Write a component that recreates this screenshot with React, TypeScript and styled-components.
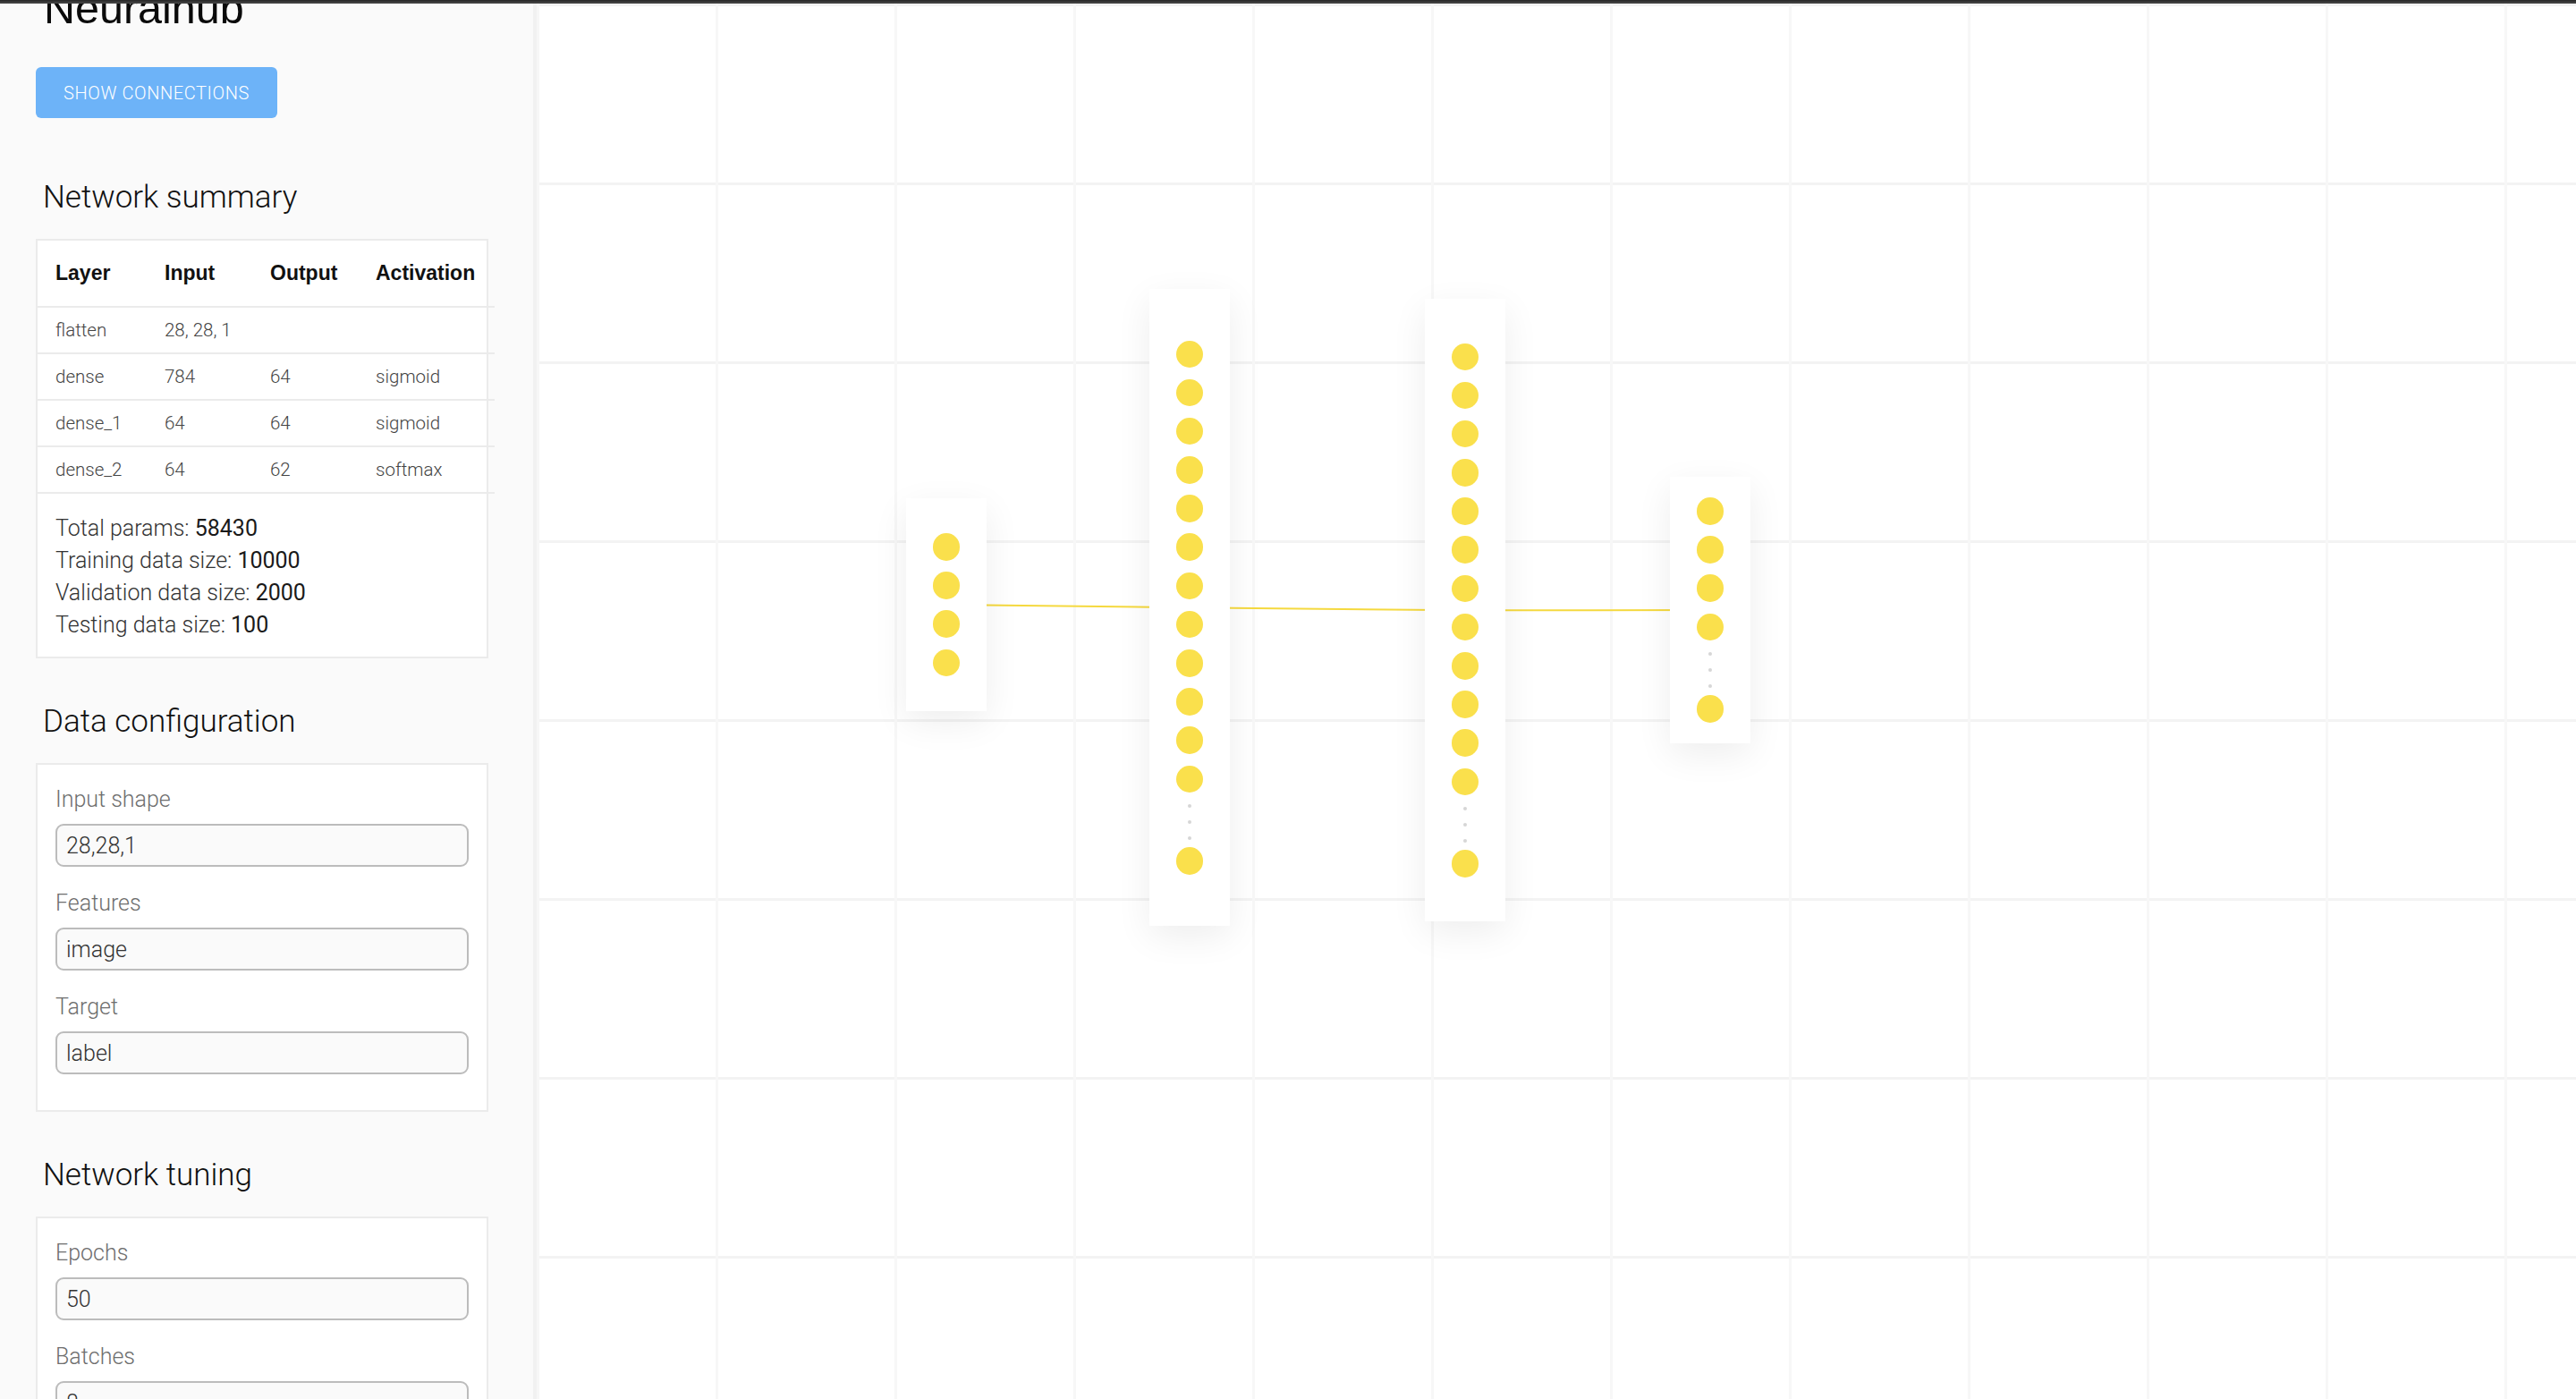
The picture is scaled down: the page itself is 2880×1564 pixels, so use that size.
import React from 'react';
import styled, { createGlobalStyle } from 'styled-components';

type LayerData = {
  id: string;
  x: number;
  y: number;
  pad: number;
  neurons: number;
  more: boolean;
};

const NEURON = 30.5;
const NEURON_GAP = 12.7;
const DOTS_HEIGHT = 36;

const layers: LayerData[] = [
  { id: 'flatten', x: 413, y: 553, pad: 39, neurons: 4, more: false },
  { id: 'dense', x: 685, y: 319, pad: 57.5, neurons: 12, more: true },
  { id: 'dense_1', x: 993, y: 330, pad: 49.5, neurons: 12, more: true },
  { id: 'dense_2', x: 1267, y: 529, pad: 23, neurons: 4, more: true },
];

const summaryRows = [
  { layer: 'flatten', input: '28, 28, 1', output: '', activation: '' },
  { layer: 'dense', input: '784', output: '64', activation: 'sigmoid' },
  { layer: 'dense_1', input: '64', output: '64', activation: 'sigmoid' },
  { layer: 'dense_2', input: '64', output: '62', activation: 'softmax' },
];

const stats = [
  { label: 'Total params:', value: '58430' },
  { label: 'Training data size:', value: '10000' },
  { label: 'Validation data size:', value: '2000' },
  { label: 'Testing data size:', value: '100' },
];

const layerHeight = (l: LayerData) => {
  const items = l.neurons + (l.more ? 2 : 0);
  const circles = l.neurons + (l.more ? 1 : 0);
  return l.pad * 2 + circles * NEURON + (items - 1) * NEURON_GAP + (l.more ? DOTS_HEIGHT : 0);
};

const App = () => {
  const centers = layers.map((l) => ({ x: l.x + 45, y: l.y + layerHeight(l) / 2 }));

  return (
    <>
      <GlobalStyle />
      <TopBar />
      <Main>
        <Sidebar>
          <Brand>Neuralhub</Brand>
          <ConnectButton type='button'>Show connections</ConnectButton>

          <SectionTitle>Network summary</SectionTitle>
          <Card>
            <SummaryTable>
              <colgroup>
                <col style={{ width: 122 }} />
                <col style={{ width: 118 }} />
                <col style={{ width: 118 }} />
                <col style={{ width: 153 }} />
              </colgroup>
              <thead>
                <tr>
                  <Th>Layer</Th>
                  <Th>Input</Th>
                  <Th>Output</Th>
                  <Th>Activation</Th>
                </tr>
              </thead>
              <tbody>
                {summaryRows.map((row) => (
                  <tr key={row.layer}>
                    <Td>{row.layer}</Td>
                    <Td>{row.input}</Td>
                    <Td>{row.output}</Td>
                    <Td>{row.activation}</Td>
                  </tr>
                ))}
              </tbody>
            </SummaryTable>
            <Stats>
              {stats.map((s) => (
                <StatLine key={s.label}>
                  {s.label} <StatValue>{s.value}</StatValue>
                </StatLine>
              ))}
            </Stats>
          </Card>

          <SectionTitle>Data configuration</SectionTitle>
          <Card>
            <Fields>
              <Field>
                <FieldLabel>Input shape</FieldLabel>
                <TextInput defaultValue='28,28,1' />
              </Field>
              <Field>
                <FieldLabel>Features</FieldLabel>
                <TextInput defaultValue='image' />
              </Field>
              <Field>
                <FieldLabel>Target</FieldLabel>
                <TextInput defaultValue='label' />
              </Field>
            </Fields>
          </Card>

          <SectionTitle>Network tuning</SectionTitle>
          <Card>
            <Fields>
              <Field>
                <FieldLabel>Epochs</FieldLabel>
                <TextInput defaultValue='50' />
              </Field>
              <Field>
                <FieldLabel>Batches</FieldLabel>
                <TextInput defaultValue='8' />
              </Field>
            </Fields>
          </Card>
        </Sidebar>

        <Canvas>
          <Links>
            {centers.slice(1).map((c, i) => (
              <line
                key={layers[i + 1].id}
                x1={centers[i].x}
                y1={centers[i].y}
                x2={c.x}
                y2={c.y}
                stroke='#f5d93f'
                strokeWidth={2}
              />
            ))}
          </Links>
          {layers.map((l) => (
            <LayerBox key={l.id} $x={l.x} $y={l.y} $pad={l.pad}>
              {Array.from({ length: l.neurons }).map((_, i) => (
                <Neuron key={i} />
              ))}
              {l.more && (
                <>
                  <More>
                    <Dot />
                    <Dot />
                    <Dot />
                  </More>
                  <Neuron />
                </>
              )}
            </LayerBox>
          ))}
        </Canvas>
      </Main>
    </>
  );
};

export default App;

const GlobalStyle = createGlobalStyle`
  html, body {
    margin: 0;
    padding: 0;
    height: 100%;
    overflow: hidden;
  }
  body {
    font-family: Roboto, 'Liberation Sans', sans-serif;
    background: #fff;
    color: #222;
  }
  * {
    box-sizing: border-box;
  }
`;

const TopBar = styled.div`
  height: 4px;
  background: linear-gradient(#262626, #4a4a4a);
`;

const Main = styled.div`
  display: flex;
  height: 1560px;
`;

const Sidebar = styled.aside`
  display: flex;
  flex-direction: column;
  align-items: flex-start;
  width: 600px;
  flex-shrink: 0;
  height: 100%;
  overflow: hidden;
  padding: 0 40px;
  background: #fafafa;
  border-right: 4px solid #f1f1f1;

  > * {
    flex-shrink: 0;
  }
`;

const Brand = styled.h1`
  margin: -19px 0 42px 9px;
  font-family: 'Liberation Sans', Arial, sans-serif;
  font-size: 48.5px;
  line-height: 48px;
  font-weight: 400;
  color: #0a0a0a;
`;

const ConnectButton = styled.button`
  width: 270px;
  height: 57px;
  margin-bottom: 69px;
  border: none;
  border-radius: 6px;
  background: #6db3f8;
  color: #fff;
  font-family: Roboto, sans-serif;
  font-size: 20px;
  font-weight: 300;
  letter-spacing: 0.6px;
  text-transform: uppercase;
  cursor: pointer;
`;

const SectionTitle = styled.h2`
  margin: 0 0 26px 8px;
  font-size: 35px;
  line-height: 40px;
  font-weight: 300;
  color: #111;
`;

const Card = styled.section`
  width: 506px;
  margin-bottom: 51px;
  background: #fff;
  border: 2px solid #ebebeb;
`;

const SummaryTable = styled.table`
  width: 511px;
  table-layout: fixed;
  border-collapse: separate;
  border-spacing: 0;
`;

const Th = styled.th`
  padding: 23px 20px;
  line-height: 27px;
  font-family: 'Liberation Sans', Arial, sans-serif;
  font-size: 23px;
  font-weight: 700;
  text-align: left;
  color: #111;
  border-bottom: 2px solid #ebebeb;
  white-space: nowrap;
`;

const Td = styled.td`
  padding: 12px 20px;
  line-height: 26px;
  font-size: 20.5px;
  font-weight: 300;
  color: #444;
  border-bottom: 2px solid #ebebeb;
  white-space: nowrap;
`;

const Stats = styled.div`
  padding: 21px 20px 17px;
`;

const StatLine = styled.div`
  font-size: 25px;
  line-height: 36px;
  font-weight: 300;
  color: #333;
`;

const StatValue = styled.span`
  font-weight: 400;
  color: #1a1a1a;
`;

const Fields = styled.div`
  display: flex;
  flex-direction: column;
  gap: 27px;
  padding: 25px 20px 40px;
`;

const Field = styled.label`
  display: flex;
  flex-direction: column;
  gap: 13px;
`;

const FieldLabel = styled.span`
  font-size: 25px;
  line-height: 28px;
  font-weight: 300;
  color: #6e6e6e;
`;

const TextInput = styled.input`
  width: 100%;
  height: 48px;
  flex-shrink: 0;
  padding: 0 10px;
  border: 2px solid #bcbcbc;
  border-radius: 9px;
  background: #fafafa;
  font-family: Roboto, sans-serif;
  font-size: 25px;
  font-weight: 300;
  color: #333;
  outline: none;
`;

const Canvas = styled.main`
  position: relative;
  flex: 1;
  overflow: hidden;
  background-color: #fff;
  background-image: linear-gradient(to right, #f7f7f7 3px, transparent 3px),
    linear-gradient(to bottom, #f3f3f3 3px, transparent 3px);
  background-size: 200px 200px;
`;

const Links = styled.svg`
  position: absolute;
  inset: 0;
  width: 100%;
  height: 100%;
`;

const LayerBox = styled.div<{ $x: number; $y: number; $pad: number }>`
  position: absolute;
  left: ${({ $x }) => $x}px;
  top: ${({ $y }) => $y}px;
  width: 90px;
  padding: ${({ $pad }) => $pad}px 0;
  display: flex;
  flex-direction: column;
  align-items: center;
  gap: ${NEURON_GAP}px;
  background: #fff;
  box-shadow: 0 12px 40px rgba(0, 0, 0, 0.07);
`;

const Neuron = styled.span`
  width: ${NEURON}px;
  height: ${NEURON}px;
  border-radius: 50%;
  background: #fae04c;
  flex-shrink: 0;
`;

const More = styled.span`
  display: flex;
  flex-direction: column;
  align-items: center;
  gap: 14px;
  height: ${DOTS_HEIGHT}px;
`;

const Dot = styled.span`
  width: 4px;
  height: 4px;
  border-radius: 50%;
  background: #d6d6d6;
  flex-shrink: 0;
`;
